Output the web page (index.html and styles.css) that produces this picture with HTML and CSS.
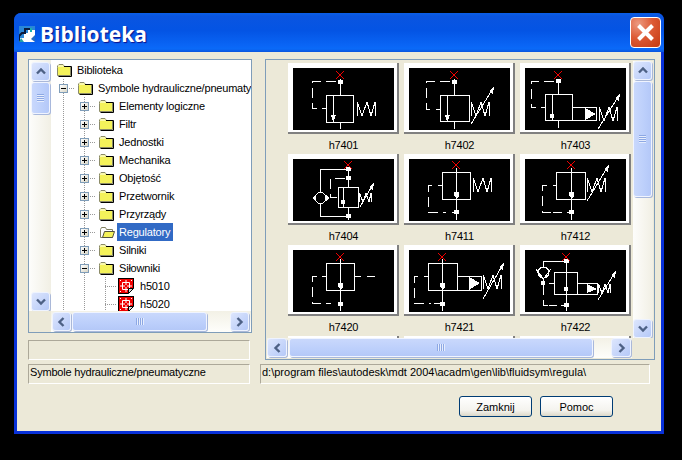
FILE: index.html
```html
<!DOCTYPE html>
<html lang="pl">
<head>
<meta charset="utf-8">
<title>Biblioteka</title>
<link rel="stylesheet" href="styles.css">
</head>
<body>
<svg class="defs" width="0" height="0" aria-hidden="true">
  <defs>
    <symbol id="folder" viewBox="0 0 15 13">
      <path d="M0.5 3.5V2L2 0.5H6L7.5 2.5H13.5V11.5H0.5Z" fill="#f4f25a" stroke="#8a8a68"/>
      <path d="M1 1.5H6.5V2.5H1Z" fill="#fff"/>
      <path d="M7 2.5H14.5V12.5H1.5" fill="none" stroke="#000"/>
    </symbol>
    <symbol id="folder-open" viewBox="0 0 17 13">
      <path d="M1.5 3.5L2.5 1.5H6.5L7.5 3.5H13.5V11.5H1.5Z" fill="#fff" stroke="#808060"/>
      <path d="M3.5 11.5L5.5 5.5H15.5L13.5 11.5Z" fill="#f4f25a" stroke="#505040"/>
    </symbol>
    <symbol id="cad" viewBox="0 0 16 16">
      <rect x="0.5" y="0.5" width="15" height="15" fill="#f00000" stroke="#000"/>
      <path d="M4.5 4.5H11.5V11.5H4.5ZM8 2V14M2 8H14" fill="none" stroke="#fff"/>
      <rect x="7" y="7" width="2" height="2" fill="#f00000"/>
      <path d="M2 2h1v1H2ZM13 2h1v1h-1ZM2 13h1v1H2Z" fill="#fff"/>
      <path d="M10 16H16V10Z" fill="#fff"/>
      <path d="M10.5 15.5V10.5H15.5Z" fill="#d8d8d8" stroke="#000"/>
    </symbol>
    <g id="spring"><polyline points="0.5,14 0.5,0 5,14 10,0 14,14 18,0 18,14"/></g>
    <g id="spring-s"><polyline points="0.5,9 0.5,0 4,9 7,0 10,9 12,0 12,9"/></g>
    <g id="mark"><path class="red" d="M-4 -4L4 4M4 -4L-4 4"/></g>
    <path id="chev-up" d="M2 6.5L6 2.5L10 6.5"/>
    <path id="chev-down" d="M2 2.5L6 6.5L10 2.5"/>
    <path id="chev-left" d="M6.5 2L2.5 6L6.5 10"/>
    <path id="chev-right" d="M2.5 2L6.5 6L2.5 10"/>
  </defs>
</svg>

<div class="window">
  <header class="titlebar">
    <svg class="appicon" width="16" height="16" viewBox="0 0 16 16">
      <rect width="16" height="16" fill="#fff"/>
      <path d="M0 0H16V4H9V7H5V12H0Z" fill="#2a86d8"/>
      <path d="M0 16V10L3 7H6V3H11" fill="none" stroke="#0b1a3c" stroke-width="2"/>
      <path d="M0 16H5L2 12Z" fill="#22a0a8"/>
      <path d="M16 9L12 13L16 16Z" fill="#2468c0"/>
      <path d="M11 2H13V6H11Z" fill="#18b0b0"/>
    </svg>
    <h1 class="title">Biblioteka</h1>
    <button class="close" type="button" aria-label="Zamknij">
      <svg width="19" height="19" viewBox="0 0 19 19"><path d="M2.5 2.5L16.5 16.5M16.5 2.5L2.5 16.5"/></svg>
    </button>
  </header>

  <div class="client">
    <div class="top">
      <div class="leftcol">
        <div class="tree">
          <div class="sb-v sb-tree">
            <span class="sbtn"><svg class="chev" width="12" height="9" viewBox="0 0 12 9"><use href="#chev-up"/></svg></span>
            <span class="thumb thumb-v tree-thumb"><i class="grip-v"></i></span>
            <span class="track"></span>
            <span class="sbtn"><svg class="chev" width="12" height="9" viewBox="0 0 12 9"><use href="#chev-down"/></svg></span>
          </div>
          <div class="tree-body">
            <div class="row"><span class="cell"><svg class="ficon" width="15" height="13"><use href="#folder"/></svg></span><span class="lbl">Biblioteka</span></div>
            <div class="row"><span class="cell exp"><i class="box minus"></i></span><span class="cell"><svg class="ficon" width="15" height="13"><use href="#folder"/></svg></span><span class="lbl">Symbole hydrauliczne/pneumatyczne</span></div>
            <div class="row"><span class="cell g"></span><span class="cell exp"><i class="box plus"></i></span><span class="cell"><svg class="ficon" width="15" height="13"><use href="#folder"/></svg></span><span class="lbl">Elementy logiczne</span></div>
            <div class="row"><span class="cell g"></span><span class="cell exp"><i class="box plus"></i></span><span class="cell"><svg class="ficon" width="15" height="13"><use href="#folder"/></svg></span><span class="lbl">Filtr</span></div>
            <div class="row"><span class="cell g"></span><span class="cell exp"><i class="box plus"></i></span><span class="cell"><svg class="ficon" width="15" height="13"><use href="#folder"/></svg></span><span class="lbl">Jednostki</span></div>
            <div class="row"><span class="cell g"></span><span class="cell exp"><i class="box plus"></i></span><span class="cell"><svg class="ficon" width="15" height="13"><use href="#folder"/></svg></span><span class="lbl">Mechanika</span></div>
            <div class="row"><span class="cell g"></span><span class="cell exp"><i class="box plus"></i></span><span class="cell"><svg class="ficon" width="15" height="13"><use href="#folder"/></svg></span><span class="lbl">Objętość</span></div>
            <div class="row"><span class="cell g"></span><span class="cell exp"><i class="box plus"></i></span><span class="cell"><svg class="ficon" width="15" height="13"><use href="#folder"/></svg></span><span class="lbl">Przetwornik</span></div>
            <div class="row"><span class="cell g"></span><span class="cell exp"><i class="box plus"></i></span><span class="cell"><svg class="ficon" width="15" height="13"><use href="#folder"/></svg></span><span class="lbl">Przyrządy</span></div>
            <div class="row"><span class="cell g"></span><span class="cell exp"><i class="box plus"></i></span><span class="cell"><svg class="ficon" width="17" height="13"><use href="#folder-open"/></svg></span><span class="lbl sel">Regulatory</span></div>
            <div class="row"><span class="cell g"></span><span class="cell exp"><i class="box plus"></i></span><span class="cell"><svg class="ficon" width="15" height="13"><use href="#folder"/></svg></span><span class="lbl">Silniki</span></div>
            <div class="row"><span class="cell g"></span><span class="cell exp"><i class="box minus"></i></span><span class="cell"><svg class="ficon" width="15" height="13"><use href="#folder"/></svg></span><span class="lbl">Siłowniki</span></div>
            <div class="row"><span class="cell g"></span><span class="cell g"></span><span class="cell exp"></span><span class="cell"><svg class="cadicon" width="16" height="16"><use href="#cad"/></svg></span><span class="lbl">h5010</span></div>
            <div class="row"><span class="cell g"></span><span class="cell g"></span><span class="cell exp"></span><span class="cell"><svg class="cadicon" width="16" height="16"><use href="#cad"/></svg></span><span class="lbl">h5020</span></div>
          </div>
          <div class="corner"></div>
          <div class="sb-h">
            <span class="sbtn"><svg class="chev" width="9" height="12" viewBox="0 0 9 12"><use href="#chev-left"/></svg></span>
            <span class="thumb thumb-h tree-hthumb"><i class="grip-h"></i></span>
            <span class="track"></span>
            <span class="sbtn"><svg class="chev" width="9" height="12" viewBox="0 0 9 12"><use href="#chev-right"/></svg></span>
          </div>
        </div>
        <div class="status status-empty"></div>
      </div>

      <div class="gallery">
        <div class="gallery-view">
          <div class="grid">
            <figure class="item"><div class="card"><svg class="sym" width="101" height="62" viewBox="0 0 101 62">
              <path d="M47.5 11V27M47.5 54V61M40.5 27V54M33.5 27.5H60.5V54.5H33.5ZM29 40.5H33"/>
              <path class="dash" d="M43 13.5H19.5V40.5H25"/>
              <rect class="f" x="45" y="12" width="5" height="4"/><path class="f" d="M38 47H43L41 53H40Z"/>
              <use href="#spring" x="64" y="34"/><use href="#mark" x="47" y="7"/>
            </svg></div><figcaption>h7401</figcaption></figure>

            <figure class="item"><div class="card"><svg class="sym" width="101" height="62" viewBox="0 0 101 62">
              <path d="M45.5 11V27M45.5 54V61M38.5 27V54M31.5 27.5H60.5V53.5H31.5ZM27 41.5H31"/>
              <path class="dash" d="M41 13.5H17.5V41.5H25"/>
              <rect class="f" x="43" y="12" width="5" height="4"/><path class="f" d="M36 47H41L39 53H38Z"/>
              <use href="#spring" x="62" y="34"/>
              <path d="M62 56L83 22"/><path class="f" d="M85 19L80 23L84 26Z"/>
              <use href="#mark" x="45" y="7"/>
            </svg></div><figcaption>h7402</figcaption></figure>

            <figure class="item"><div class="card"><svg class="sym" width="101" height="62" viewBox="0 0 101 62">
              <path d="M33.5 11V26M33.5 52V60M27.5 26V52M20.5 26.5H47.5V52.5H20.5ZM47.5 39.5H71.5V52.5H47.5ZM16 39.5H20"/>
              <path class="dash" d="M29 13.5H6.5V39.5H11"/>
              <rect class="f" x="31" y="11" width="5" height="4"/><rect class="f" x="25" y="46" width="4" height="4"/>
              <path class="f" d="M60 40V52L71 46Z"/>
              <use href="#spring" x="74" y="39"/>
              <path d="M73 61L93 29"/><path class="f" d="M95 26L90 30L94 33Z"/>
              <use href="#mark" x="33" y="7"/>
            </svg></div><figcaption>h7403</figcaption></figure>

            <figure class="item"><div class="card"><svg class="sym" width="101" height="62" viewBox="0 0 101 62">
              <path d="M55.5 9V28M55.5 48V61M27.5 10.5H55M27.5 10V33M27.5 45V57.5H55M50.5 28V48M45.5 28.5H65.5V48.5H45.5Z"/>
              <path class="dash" d="M52 19.5H37.5V38.5H45"/>
              <circle cx="27.5" cy="39" r="5.5"/>
              <path class="f" d="M19 39L22 36V42ZM36 39L33 36V42Z"/>
              <rect class="f" x="53" y="8" width="5" height="4"/><rect class="f" x="53" y="17" width="5" height="4"/><rect class="f" x="53" y="55" width="5" height="4"/><rect class="f" x="48" y="41" width="4" height="4"/>
              <use href="#spring-s" x="66" y="34"/>
              <path d="M67 48L79 27"/><path class="f" d="M81 24L76 28L80 31Z"/>
              <use href="#mark" x="55" y="6"/>
            </svg></div><figcaption>h7404</figcaption></figure>

            <figure class="item"><div class="card"><svg class="sym" width="101" height="62" viewBox="0 0 101 62">
              <path d="M47.5 9V61M33.5 13.5H61.5V40.5H33.5ZM29 26.5H33M43 53.5H47"/>
              <path class="dash" d="M23 26.5H19.5V53.5H37"/>
              <rect class="f" x="45" y="51" width="5" height="4"/><path class="f" d="M45 33H50V37L48 39H47L45 37Z"/>
              <use href="#spring" x="64" y="19"/><use href="#mark" x="47" y="6"/>
            </svg></div><figcaption>h7411</figcaption></figure>

            <figure class="item"><div class="card"><svg class="sym" width="101" height="62" viewBox="0 0 101 62">
              <path d="M46.5 9V61M31.5 13.5H60.5V40.5H31.5ZM28 26.5H31M28 53.5H37M42 53.5H46"/>
              <path class="dash" d="M22 26.5H17.5V53.5H27"/>
              <rect class="f" x="44" y="51" width="5" height="4"/><path class="f" d="M44 33H49V37L47 39H46L44 37Z"/>
              <use href="#spring" x="62" y="19"/>
              <path d="M62 42L82 9"/><path class="f" d="M84 6L79 10L83 13Z"/>
              <use href="#mark" x="46" y="6"/>
            </svg></div><figcaption>h7412</figcaption></figure>

            <figure class="item"><div class="card"><svg class="sym" width="101" height="62" viewBox="0 0 101 62">
              <path d="M47.5 9V61M33.5 13.5H61.5V40.5H33.5ZM29 26.5H33M61 26.5H68M74 26.5H82"/>
              <path class="dash" d="M24 26.5H19.5V53.5H38"/>
              <rect class="f" x="45" y="52" width="5" height="4"/><path class="f" d="M45 33H50V37L48 39H47L45 37Z"/>
              <use href="#mark" x="47" y="7"/>
            </svg></div><figcaption>h7420</figcaption></figure>

            <figure class="item"><div class="card"><svg class="sym" width="101" height="62" viewBox="0 0 101 62">
              <path d="M33.5 9V61M19.5 13.5H48.5V40.5H19.5ZM48 26.5H72.5V40.5H48ZM15 26.5H19"/>
              <path class="dash" d="M9 26.5H5.5V53.5H22"/>
              <path d="M25 53.5H33"/>
              <rect class="f" x="31" y="52" width="5" height="4"/><path class="f" d="M31 33H36V37L34 39H33L31 37Z"/>
              <path class="f" d="M60 27V40L71 33Z"/>
              <use href="#spring" x="74" y="25"/>
              <path d="M74 49L93 16"/><path class="f" d="M95 13L90 17L94 20Z"/>
              <use href="#mark" x="33" y="7"/>
            </svg></div><figcaption>h7421</figcaption></figure>

            <figure class="item"><div class="card"><svg class="sym" width="101" height="62" viewBox="0 0 101 62">
              <path d="M41.5 9V61M18.5 11.5H41M18.5 11V17M18.5 28V33M29.5 22.5H52.5V44.5H29.5ZM52 33.5H72.5V44.5H52ZM24 33.5H29M24 55.5H32M36 55.5H41"/>
              <path class="dash" d="M18.5 35V55.5H24"/>
              <circle cx="18.5" cy="22.5" r="5.5"/>
              <path d="M11 19L18.5 29L26 19"/>
              <rect class="f" x="16" y="31" width="4" height="4"/><rect class="f" x="39" y="9" width="5" height="4"/><rect class="f" x="39" y="53" width="5" height="4"/><rect class="f" x="39" y="37" width="4" height="4"/>
              <path class="f" d="M62 34V43L72 39Z"/>
              <use href="#spring-s" x="73" y="34"/>
              <path d="M73 50L89 24"/><path class="f" d="M91 21L86 25L90 28Z"/>
              <use href="#mark" x="41" y="7"/>
            </svg></div><figcaption>h7422</figcaption></figure>

            <figure class="item"><div class="card"><div class="blank"></div></div></figure>
            <figure class="item"><div class="card"><div class="blank"></div></div></figure>
            <figure class="item"><div class="card"><div class="blank"></div></div></figure>
          </div>
        </div>
        <div class="sb-v sb-gallery">
          <span class="sbtn"><svg class="chev" width="12" height="9" viewBox="0 0 12 9"><use href="#chev-up"/></svg></span>
          <span class="thumb thumb-v gallery-thumb"><i class="grip-v"></i></span>
          <span class="track"></span>
          <span class="sbtn"><svg class="chev" width="12" height="9" viewBox="0 0 12 9"><use href="#chev-down"/></svg></span>
        </div>
        <div class="sb-h sb-h-gallery">
          <span class="sbtn"><svg class="chev" width="9" height="12" viewBox="0 0 9 12"><use href="#chev-left"/></svg></span>
          <span class="thumb thumb-h gallery-hthumb"><i class="grip-h"></i></span>
          <span class="track"></span>
          <span class="sbtn"><svg class="chev" width="9" height="12" viewBox="0 0 9 12"><use href="#chev-right"/></svg></span>
        </div>
        <div class="corner"></div>
      </div>
    </div>

    <div class="statusbar">
      <div class="status status-left">Symbole hydrauliczne/pneumatyczne</div>
      <div class="status status-right">d:\program files\autodesk\mdt 2004\acadm\gen\lib\fluidsym\regula\</div>
    </div>

    <div class="actions">
      <button class="btn" type="button">Zamknij</button>
      <button class="btn" type="button">Pomoc</button>
    </div>
  </div>
</div>
</body>
</html>
```

FILE: styles.css
```css
* { box-sizing: border-box; }
html, body { margin: 0; padding: 0; }
body {
  width: 682px;
  height: 460px;
  overflow: hidden;
  background: #000;
  font: 11px/14px "Liberation Sans", Arial, sans-serif;
  letter-spacing: -0.2px;
  color: #000;
  padding: 13px 0 0 14px;
}
.defs { display: block; height: 0; width: 0; }

.window {
  width: 650px;
  height: 421px;
  display: flex;
  flex-direction: column;
  border-radius: 7px 7px 0 0;
  overflow: hidden;
  background: #0831d9;
}
.titlebar {
  height: 39px;
  flex: none;
  display: flex;
  align-items: center;
  padding: 0 3px 0 5px;
  background: linear-gradient(#0a5fe8 0, #0a55e0 8%, #0454e4 45%, #0a66f6 85%, #0a6af8 92%, #0a55de 100%);
}
.appicon { flex: none; margin-top: 3px; }
.title {
  margin: 2px 0 0 5px;
  flex: 1;
  font: bold 21px/24px "Open Sans", sans-serif;
  letter-spacing: 0;
  color: #fff;
  text-shadow: 1px 1px 1px #0f1089;
}
.close {
  width: 31px;
  height: 31px;
  padding: 0;
  display: flex;
  align-items: center;
  justify-content: center;
  border: 1px solid #fff;
  border-radius: 4px;
  background: radial-gradient(circle at 25% 20%, #ec9a80, #dd5a35 45%, #c43a12 100%);
}
.close svg path { stroke: #fff; stroke-width: 4; fill: none; }

.client {
  flex: 1;
  margin: 0 3px 3px;
  padding: 7px 0 0 11px;
  background: #ece9d8;
  display: flex;
  flex-direction: column;
}
.top { display: flex; gap: 13px; align-items: flex-start; }
.leftcol { width: 224px; flex: none; display: flex; flex-direction: column; gap: 7px; }

.tree {
  height: 274px;
  border: 1px solid #7f9db9;
  background: #fff;
  display: grid;
  grid-template-columns: 22px 1fr;
  grid-template-rows: 1fr 21px;
}
.tree-body { overflow: hidden; padding: 1px 0 0 2px; }
.row { display: flex; height: 18px; align-items: center; white-space: nowrap; }
.cell { flex: none; width: 21px; height: 18px; display: flex; align-items: center; padding-left: 4px; }
.g { background: repeating-linear-gradient(#999 0 1px, transparent 1px 2px) 10px 0 / 1px 100% no-repeat; }
.exp {
  padding-left: 6px;
  background:
    repeating-linear-gradient(#999 0 1px, transparent 1px 2px) 10px 0 / 1px 100% no-repeat,
    repeating-linear-gradient(90deg, #999 0 1px, transparent 1px 2px) 10px 9px / 11px 1px no-repeat;
}
.ficon, .cadicon { display: block; flex: none; }
.ficon { margin-top: 1px; }
.cadicon { margin-left: -2px; }
.box {
  display: block;
  width: 9px;
  height: 9px;
  margin-top: 1px;
  border: 1px solid #7f9db9;
  background-color: #fff;
  background-repeat: no-repeat;
}
.plus {
  background-image: linear-gradient(#000, #000), linear-gradient(#000, #000), linear-gradient(135deg, #fff, #d8d5c5);
  background-size: 5px 1px, 1px 5px, 100% 100%;
  background-position: 1px 3px, 3px 1px, 0 0;
}
.minus {
  background-image: linear-gradient(#000, #000), linear-gradient(135deg, #fff, #d8d5c5);
  background-size: 5px 1px, 100% 100%;
  background-position: 1px 3px, 0 0;
}
.lbl { padding: 2px 3px; height: 18px; line-height: 14px; }
.sel { background: #316ac5; color: #fff; margin-left: 1px; padding-left: 2px; }

.sb-v {
  display: flex;
  flex-direction: column;
  gap: 1px;
  padding: 2px 0 0 1px;
  background: linear-gradient(90deg, #fdfdfb, #f1efe4);
}
.sb-tree { padding-left: 2px; padding-right: 1px; }
.sb-h {
  display: flex;
  gap: 1px;
  padding: 1px 2px 1px 1px;
  background: linear-gradient(#f3f1e6, #fefefb);
}
.track { flex: 1; }
.sbtn {
  flex: none;
  width: 19px;
  height: 19px;
  display: flex;
  align-items: center;
  justify-content: center;
  border: 1px solid #eef3ff;
  border-radius: 3px;
  background: linear-gradient(135deg, #dde6fd, #b5c9f8);
  box-shadow: 1px 1px 0 #aab8d8;
}
.chev { display: block; }
.chev use { fill: none; stroke: #4d6185; stroke-width: 2.4; }
.thumb {
  flex: none;
  display: flex;
  align-items: center;
  justify-content: center;
  border: 1px solid #f0f4ff;
  border-radius: 3px;
  box-shadow: 1px 1px 0 #a8b8dc;
}
.thumb-v { width: 19px; background: linear-gradient(90deg, #c9d8fc, #bccffb 60%, #b4c8f8); }
.thumb-h { height: 19px; background: linear-gradient(#c9d8fc, #bccffb 60%, #b4c8f8); }
.tree-thumb { height: 32px; }
.gallery-thumb { height: 116px; }
.tree-hthumb { width: 135px; }
.gallery-hthumb { width: 304px; }
.grip-v {
  display: block; width: 7px; height: 8px;
  background: repeating-linear-gradient(#8da8e4 0 1px, #e6edfd 1px 2px);
}
.grip-h {
  display: block; width: 8px; height: 7px;
  background: repeating-linear-gradient(90deg, #8da8e4 0 1px, #e6edfd 1px 2px);
}
.corner { background: #ece9d8; }

.status {
  height: 20px;
  padding: 0 0 0 1px;
  white-space: nowrap;
  overflow: hidden;
  background: #ece9d8;
  border: 1px solid;
  border-color: #aca899 #fff #fff #aca899;
}
.status-empty { width: 222px; }

.gallery {
  width: 390px;
  height: 301px;
  flex: none;
  border: 1px solid #7f9db9;
  padding: 1px;
  background: #ece9d8;
  display: grid;
  grid-template-columns: 1fr 20px;
  grid-template-rows: 277px 20px;
  column-gap: 1px;
}
.gallery-view { overflow: hidden; padding: 2px 0 0 21px; }
.grid {
  display: grid;
  grid-template-columns: repeat(3, 111px);
  grid-auto-rows: 91px;
  column-gap: 5px;
}
.item { margin: 0; text-align: center; }
.card {
  width: 111px;
  height: 71px;
  padding: 5px;
  background: #fff;
  box-shadow: inset -2px -2px 0 #808080;
}
.sym, .blank { display: block; width: 101px; height: 62px; background: #000; }
.sym { shape-rendering: crispEdges; fill: none; stroke: #fff; stroke-width: 1; }
.sym .f { fill: #fff; stroke: none; }
.sym .dash { stroke-dasharray: 10 5; }
.red { stroke: #f00000; }
figcaption { margin-top: 4px; line-height: 14px; }

.sb-gallery { padding: 0; }
.sb-h-gallery { gap: 2px; padding: 0 1px 1px 0; background: linear-gradient(#f3f1e6, #fefefb); }
.sb-h-gallery .sbtn { width: 20px; }

.statusbar { display: flex; margin-top: 4px; gap: 10px; }
.status-left { width: 222px; }
.status-right { width: 390px; letter-spacing: 0; }

.actions {
  display: flex;
  justify-content: flex-end;
  gap: 8px;
  padding: 12px 48px 0 0;
}
.btn {
  width: 73px;
  height: 21px;
  padding: 0;
  font: 11px/14px "Liberation Sans", Arial, sans-serif;
  letter-spacing: 0;
  color: #000;
  border: 1px solid #003c74;
  border-radius: 3px;
  background: linear-gradient(#fff, #f4f3ee 70%, #dcd8c8);
}
```
